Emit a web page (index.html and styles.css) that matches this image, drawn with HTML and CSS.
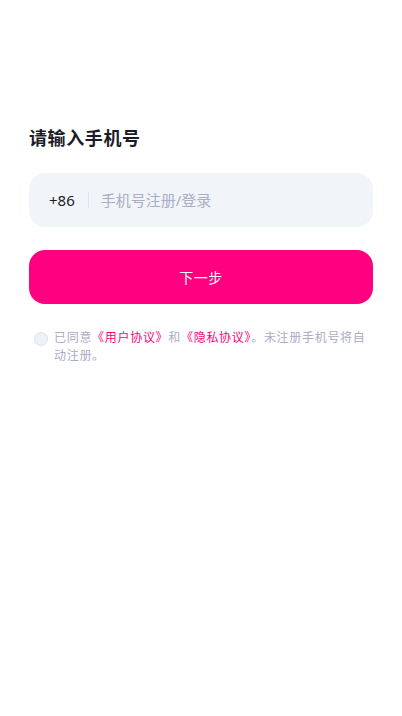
FILE: index.html
```html
<!DOCTYPE html>
<html lang="zh-CN">
<head>
  <meta charset="UTF-8" />
  <meta name="viewport" content="width=device-width, initial-scale=1.0"/>
  <title>登录</title>
  <link rel="stylesheet" href="styles.css">
</head>
<body>
  <div class="page">
    <h1 class="title">请输入手机号</h1>

    <div class="phone-box">
      <span class="code">+86</span>
      <span class="divider"></span>
      <input type="tel" class="phone-input" placeholder="手机号注册/登录" />
    </div>

    <button class="next-btn">下一步</button>

    <div class="agree">
      <span class="check"></span>
      <p class="agree-text">已同意<a class="link">《用户协议》</a>和<a class="link">《隐私协议》</a>。未注册手机号将自动注册。</p>
    </div>
  </div>
</body>
</html>
```

FILE: styles.css
```css
body {
  margin: 0;
  background-color: #fff;
  font-family: "Noto Sans", "Noto Sans CJK SC", sans-serif;
}

.page {
  padding: 124px 29px 0;
}

.title {
  margin: 0;
  font-size: 18px;
  font-weight: bold;
  letter-spacing: 0.6px;
  line-height: 28px;
  color: #1c1c28;
}

.phone-box {
  display: flex;
  align-items: center;
  height: 54px;
  margin-top: 21px;
  padding: 0 20px;
  background-color: #f1f4f8;
  border-radius: 16px;
}

.code {
  font-size: 15px;
  color: #1c1c28;
}

.divider {
  width: 1px;
  height: 16px;
  margin: 0 12px 0 13px;
  background-color: #e0e4ec;
}

.phone-input {
  flex: 1;
  border: none;
  outline: none;
  background: transparent;
  font-family: inherit;
  font-size: 15px;
  padding: 0;
  color: #1c1c28;
}

.phone-input::placeholder {
  color: #a9adc6;
}

.next-btn {
  display: block;
  width: 100%;
  height: 54px;
  margin-top: 23px;
  border: none;
  border-radius: 16px;
  background-color: #ff0080;
  color: #fff;
  font-family: inherit;
  font-size: 14px;
  letter-spacing: 0.5px;
  cursor: pointer;
}

.agree {
  display: flex;
  align-items: flex-start;
  gap: 6px;
  margin-top: 25px;
  padding-left: 5px;
}

.check {
  flex: none;
  width: 12px;
  height: 12px;
  margin-top: 3px;
  border: 1px solid #dde2ec;
  border-radius: 50%;
  background-color: #eef1f7;
}

.agree-text {
  margin: 0;
  font-size: 12px;
  letter-spacing: 0.7px;
  line-height: 18px;
  color: #a9adc6;
}

.link {
  color: #ff0080;
}
```
